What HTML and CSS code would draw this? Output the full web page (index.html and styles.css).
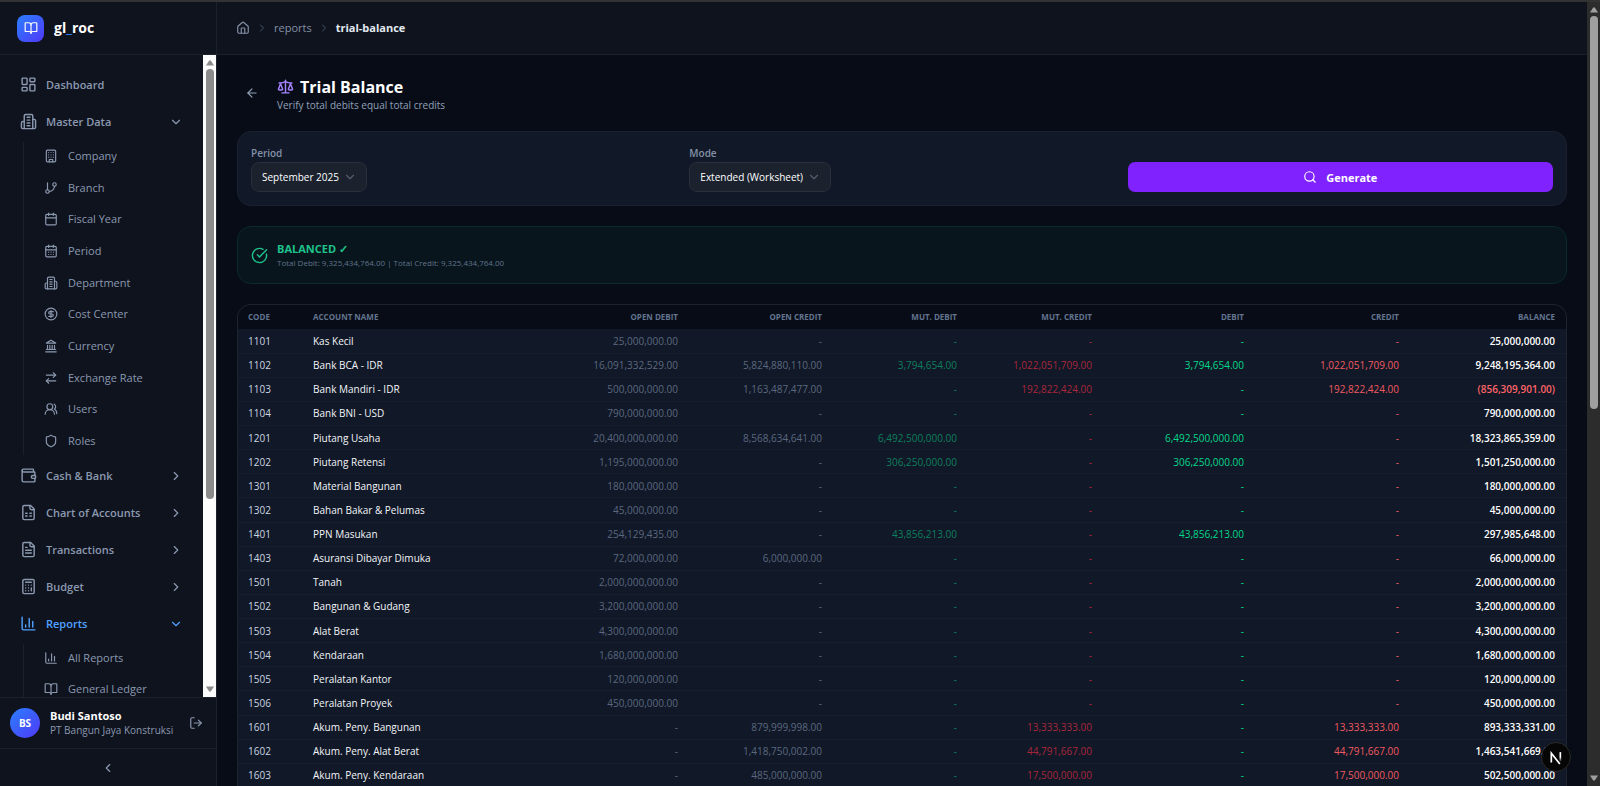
FILE: index.html
```
<!DOCTYPE html>
<html lang="en">
  <head>
    <meta charset="UTF-8" />
    <title>Trial Balance</title>
    <link rel="stylesheet" href="styles.css" />
  </head>
  <body>
    <!-- icon set -->
    <svg width="0" height="0" class="sprite" aria-hidden="true">
      <symbol id="i-book" viewBox="0 0 24 24"><path d="M12 7v14" /><path d="M3 18a1 1 0 0 1-1-1V4a1 1 0 0 1 1-1h5a4 4 0 0 1 4 4 4 4 0 0 1 4-4h5a1 1 0 0 1 1 1v13a1 1 0 0 1-1 1h-6a3 3 0 0 0-3 3 3 3 0 0 0-3-3z" /></symbol>
      <symbol id="i-dashboard" viewBox="0 0 24 24"><rect width="7" height="9" x="3" y="3" rx="1" /><rect width="7" height="5" x="14" y="3" rx="1" /><rect width="7" height="9" x="14" y="12" rx="1" /><rect width="7" height="5" x="3" y="16" rx="1" /></symbol>
      <symbol id="i-building2" viewBox="0 0 24 24"><path d="M6 22V4a2 2 0 0 1 2-2h8a2 2 0 0 1 2 2v18Z" /><path d="M6 12H4a2 2 0 0 0-2 2v6a2 2 0 0 0 2 2h2" /><path d="M18 9h2a2 2 0 0 1 2 2v9a2 2 0 0 1-2 2h-2" /><path d="M10 6h4M10 10h4M10 14h4M10 18h4" /></symbol>
      <symbol id="i-building" viewBox="0 0 24 24"><rect width="16" height="20" x="4" y="2" rx="2" /><path d="M9 22v-4h6v4" /><path d="M8 6h.01M16 6h.01M12 6h.01M12 10h.01M12 14h.01M16 10h.01M16 14h.01M8 10h.01M8 14h.01" /></symbol>
      <symbol id="i-branch" viewBox="0 0 24 24"><path d="M6 3v12" /><circle cx="18" cy="6" r="3" /><circle cx="6" cy="18" r="3" /><path d="M18 9a9 9 0 0 1-9 9" /></symbol>
      <symbol id="i-calendar" viewBox="0 0 24 24"><path d="M8 2v4M16 2v4M3 10h18" /><rect width="18" height="18" x="3" y="4" rx="2" /></symbol>
      <symbol id="i-calendar-days" viewBox="0 0 24 24"><path d="M8 2v4M16 2v4M3 10h18" /><rect width="18" height="18" x="3" y="4" rx="2" /><path d="M8 14h.01M12 14h.01M16 14h.01M8 18h.01M12 18h.01M16 18h.01" /></symbol>
      <symbol id="i-dollar" viewBox="0 0 24 24"><circle cx="12" cy="12" r="10" /><path d="M16 8h-6a2 2 0 1 0 0 4h4a2 2 0 1 1 0 4H8" /><path d="M12 18V6" /></symbol>
      <symbol id="i-landmark" viewBox="0 0 24 24"><path d="M3 22h18M6 18v-7M10 18v-7M14 18v-7M18 18v-7M4 18h16" /><path d="m12 2 8 5H4z" /></symbol>
      <symbol id="i-exchange" viewBox="0 0 24 24"><path d="m16 3 4 4-4 4" /><path d="M20 7H4" /><path d="m8 21-4-4 4-4" /><path d="M4 17h16" /></symbol>
      <symbol id="i-users" viewBox="0 0 24 24"><path d="M18 21a8 8 0 0 0-16 0" /><circle cx="10" cy="8" r="5" /><path d="M22 20c0-3.37-2-6.5-4-8a5 5 0 0 0-.45-8.3" /></symbol>
      <symbol id="i-shield" viewBox="0 0 24 24"><path d="M20 13c0 5-3.5 7.5-7.66 8.95a1 1 0 0 1-.67-.01C7.5 20.5 4 18 4 13V6a1 1 0 0 1 1-1c2 0 4.5-1.2 6.24-2.72a1.17 1.17 0 0 1 1.52 0C14.51 3.81 17 5 19 5a1 1 0 0 1 1 1z" /></symbol>
      <symbol id="i-wallet" viewBox="0 0 24 24"><path d="M19 7V4a1 1 0 0 0-1-1H5a2 2 0 0 0 0 4h15a1 1 0 0 1 1 1v4h-3a2 2 0 0 0 0 4h3a1 1 0 0 0 1-1v-2a1 1 0 0 0-1-1" /><path d="M3 5v14a2 2 0 0 0 2 2h15a1 1 0 0 0 1-1v-4" /></symbol>
      <symbol id="i-sheet" viewBox="0 0 24 24"><path d="M15 2H6a2 2 0 0 0-2 2v16a2 2 0 0 0 2 2h12a2 2 0 0 0 2-2V7Z" /><path d="M14 2v4a2 2 0 0 0 2 2h4" /><path d="M8 13h2M14 13h2M8 17h2M14 17h2" /></symbol>
      <symbol id="i-file" viewBox="0 0 24 24"><path d="M15 2H6a2 2 0 0 0-2 2v16a2 2 0 0 0 2 2h12a2 2 0 0 0 2-2V7Z" /><path d="M14 2v4a2 2 0 0 0 2 2h4" /><path d="M10 9H8M16 13H8M16 17H8" /></symbol>
      <symbol id="i-calculator" viewBox="0 0 24 24"><rect width="16" height="20" x="4" y="2" rx="2" /><path d="M8 6h8M16 14v4M16 10h.01M12 10h.01M8 10h.01M12 14h.01M8 14h.01M12 18h.01M8 18h.01" /></symbol>
      <symbol id="i-chart" viewBox="0 0 24 24"><path d="M3 3v16a2 2 0 0 0 2 2h16" /><path d="M18 17V9M13 17V5M8 17v-3" /></symbol>
      <symbol id="i-home" viewBox="0 0 24 24"><path d="M15 21v-8a1 1 0 0 0-1-1h-4a1 1 0 0 0-1 1v8" /><path d="M3 10a2 2 0 0 1 .71-1.53l7-6a2 2 0 0 1 2.58 0l7 6A2 2 0 0 1 21 10v9a2 2 0 0 1-2 2H5a2 2 0 0 1-2-2z" /></symbol>
      <symbol id="i-scale" viewBox="0 0 24 24"><path d="m16 16 3-8 3 8c-.87.65-1.92 1-3 1s-2.13-.35-3-1Z" /><path d="m2 16 3-8 3 8c-.87.65-1.92 1-3 1s-2.13-.35-3-1Z" /><path d="M7 21h10M12 3v18" /><path d="M3 7h2c2 0 5-1 7-2 2 1 5 2 7 2h2" /></symbol>
      <symbol id="i-back" viewBox="0 0 24 24"><path d="m12 19-7-7 7-7" /><path d="M19 12H5" /></symbol>
      <symbol id="i-search" viewBox="0 0 24 24"><circle cx="11" cy="11" r="8" /><path d="m21 21-4.3-4.3" /></symbol>
      <symbol id="i-check" viewBox="0 0 24 24"><path d="M21.8 10A10 10 0 1 1 17 3.34" /><path d="m9 11 3 3L22 4" /></symbol>
      <symbol id="i-logout" viewBox="0 0 24 24"><path d="M9 21H5a2 2 0 0 1-2-2V5a2 2 0 0 1 2-2h4" /><path d="m16 17 5-5-5-5" /><path d="M21 12H9" /></symbol>
      <symbol id="i-down" viewBox="0 0 24 24"><path d="m6 9 6 6 6-6" /></symbol>
      <symbol id="i-right" viewBox="0 0 24 24"><path d="m9 18 6-6-6-6" /></symbol>
      <symbol id="i-left" viewBox="0 0 24 24"><path d="m15 18-6-6 6-6" /></symbol>
    </svg>

    <div class="app">
      <aside class="sidebar">
        <div class="brand">
          <span class="brand-logo"><svg class="icon"><use href="#i-book" /></svg></span>
          <span class="brand-name">gl<span>_</span>roc</span>
        </div>

        <div class="nav-area">
          <nav class="nav">
            <a class="nav-item" href="#"><svg class="icon"><use href="#i-dashboard" /></svg>Dashboard</a>
            <button class="nav-item"><svg class="icon"><use href="#i-building2" /></svg>Master Data<svg class="icon chevron"><use href="#i-down" /></svg></button>
            <div class="subnav subnav-master">
              <a href="#"><svg class="icon"><use href="#i-building" /></svg>Company</a>
              <a href="#"><svg class="icon"><use href="#i-branch" /></svg>Branch</a>
              <a href="#"><svg class="icon"><use href="#i-calendar" /></svg>Fiscal Year</a>
              <a href="#"><svg class="icon"><use href="#i-calendar-days" /></svg>Period</a>
              <a href="#"><svg class="icon"><use href="#i-building2" /></svg>Department</a>
              <a href="#"><svg class="icon"><use href="#i-dollar" /></svg>Cost Center</a>
              <a href="#"><svg class="icon"><use href="#i-landmark" /></svg>Currency</a>
              <a href="#"><svg class="icon"><use href="#i-exchange" /></svg>Exchange Rate</a>
              <a href="#"><svg class="icon"><use href="#i-users" /></svg>Users</a>
              <a href="#"><svg class="icon"><use href="#i-shield" /></svg>Roles</a>
            </div>
            <button class="nav-item"><svg class="icon"><use href="#i-wallet" /></svg>Cash &amp; Bank<svg class="icon chevron"><use href="#i-right" /></svg></button>
            <button class="nav-item"><svg class="icon"><use href="#i-sheet" /></svg>Chart of Accounts<svg class="icon chevron"><use href="#i-right" /></svg></button>
            <button class="nav-item"><svg class="icon"><use href="#i-file" /></svg>Transactions<svg class="icon chevron"><use href="#i-right" /></svg></button>
            <button class="nav-item"><svg class="icon"><use href="#i-calculator" /></svg>Budget<svg class="icon chevron"><use href="#i-right" /></svg></button>
            <button class="nav-item active"><svg class="icon"><use href="#i-chart" /></svg>Reports<svg class="icon chevron"><use href="#i-down" /></svg></button>
            <div class="subnav">
              <a href="#"><svg class="icon"><use href="#i-chart" /></svg>All Reports</a>
              <a href="#"><svg class="icon"><use href="#i-book" /></svg>General Ledger</a>
            </div>
          </nav>
          <div class="scrollbar scrollbar-light">
            <svg class="arrow" viewBox="0 0 10 10"><path d="M4 2h2l4 6H0z" /></svg>
            <div class="track"><div class="thumb"></div></div>
            <svg class="arrow" viewBox="0 0 10 10"><path d="M4 8h2l4-6H0z" /></svg>
          </div>
        </div>

        <div class="user">
          <span class="avatar">BS</span>
          <div class="user-info">
            <strong>Budi Santoso</strong>
            <span>PT Bangun Jaya Konstruksi</span>
          </div>
          <button class="logout" aria-label="Log out"><svg class="icon"><use href="#i-logout" /></svg></button>
        </div>
        <button class="collapse" aria-label="Collapse sidebar"><svg class="icon"><use href="#i-left" /></svg></button>
      </aside>

      <div class="page">
        <header class="topbar">
          <a href="#" class="home" aria-label="Home"><svg class="icon"><use href="#i-home" /></svg></a>
          <svg class="icon sep"><use href="#i-right" /></svg>
          <a href="#">reports</a>
          <svg class="icon sep"><use href="#i-right" /></svg>
          <strong>trial-balance</strong>
        </header>

        <main class="content">
          <div class="heading">
            <button class="back" aria-label="Back"><svg class="icon"><use href="#i-back" /></svg></button>
            <div class="heading-text">
              <h1><svg class="icon"><use href="#i-scale" /></svg>Trial Balance</h1>
              <p>Verify total debits equal total credits</p>
            </div>
          </div>

          <form class="filters">
            <div class="field">
              <label for="period">Period</label>
              <div class="select">
                <select id="period"><option>September 2025</option></select>
                <svg class="icon"><use href="#i-down" /></svg>
              </div>
            </div>
            <div class="field">
              <label for="mode">Mode</label>
              <div class="select">
                <select id="mode"><option>Extended (Worksheet)</option></select>
                <svg class="icon"><use href="#i-down" /></svg>
              </div>
            </div>
            <button type="button" class="generate"><svg class="icon"><use href="#i-search" /></svg>Generate</button>
          </form>

          <div class="status">
            <svg class="icon"><use href="#i-check" /></svg>
            <div>
              <strong>BALANCED ✓</strong>
              <p>Total Debit: 9,325,434,764.00 | Total Credit: 9,325,434,764.00</p>
            </div>
          </div>

          <div class="table-card">
            <table>
              <colgroup>
                <col class="c-code" /><col class="c-name" /><col class="c-od" /><col class="c-oc" /><col class="c-md" /><col class="c-mc" /><col class="c-d" /><col class="c-c" /><col class="c-b" />
              </colgroup>
              <thead>
                <tr><th>CODE</th><th>ACCOUNT NAME</th><th>OPEN DEBIT</th><th>OPEN CREDIT</th><th>MUT. DEBIT</th><th>MUT. CREDIT</th><th>DEBIT</th><th>CREDIT</th><th>BALANCE</th></tr>
              </thead>
              <tbody>
                <tr><td>1101</td><td>Kas Kecil</td><td>25,000,000.00</td><td>-</td><td>-</td><td>-</td><td>-</td><td>-</td><td>25,000,000.00</td></tr>
                <tr><td>1102</td><td>Bank BCA - IDR</td><td>16,091,332,529.00</td><td>5,824,880,110.00</td><td>3,794,654.00</td><td>1,022,051,709.00</td><td>3,794,654.00</td><td>1,022,051,709.00</td><td>9,248,195,364.00</td></tr>
                <tr><td>1103</td><td>Bank Mandiri - IDR</td><td>500,000,000.00</td><td>1,163,487,477.00</td><td>-</td><td>192,822,424.00</td><td>-</td><td>192,822,424.00</td><td class="negative">(856,309,901.00)</td></tr>
                <tr><td>1104</td><td>Bank BNI - USD</td><td>790,000,000.00</td><td>-</td><td>-</td><td>-</td><td>-</td><td>-</td><td>790,000,000.00</td></tr>
                <tr><td>1201</td><td>Piutang Usaha</td><td>20,400,000,000.00</td><td>8,568,634,641.00</td><td>6,492,500,000.00</td><td>-</td><td>6,492,500,000.00</td><td>-</td><td>18,323,865,359.00</td></tr>
                <tr><td>1202</td><td>Piutang Retensi</td><td>1,195,000,000.00</td><td>-</td><td>306,250,000.00</td><td>-</td><td>306,250,000.00</td><td>-</td><td>1,501,250,000.00</td></tr>
                <tr><td>1301</td><td>Material Bangunan</td><td>180,000,000.00</td><td>-</td><td>-</td><td>-</td><td>-</td><td>-</td><td>180,000,000.00</td></tr>
                <tr><td>1302</td><td>Bahan Bakar &amp; Pelumas</td><td>45,000,000.00</td><td>-</td><td>-</td><td>-</td><td>-</td><td>-</td><td>45,000,000.00</td></tr>
                <tr><td>1401</td><td>PPN Masukan</td><td>254,129,435.00</td><td>-</td><td>43,856,213.00</td><td>-</td><td>43,856,213.00</td><td>-</td><td>297,985,648.00</td></tr>
                <tr><td>1403</td><td>Asuransi Dibayar Dimuka</td><td>72,000,000.00</td><td>6,000,000.00</td><td>-</td><td>-</td><td>-</td><td>-</td><td>66,000,000.00</td></tr>
                <tr><td>1501</td><td>Tanah</td><td>2,000,000,000.00</td><td>-</td><td>-</td><td>-</td><td>-</td><td>-</td><td>2,000,000,000.00</td></tr>
                <tr><td>1502</td><td>Bangunan &amp; Gudang</td><td>3,200,000,000.00</td><td>-</td><td>-</td><td>-</td><td>-</td><td>-</td><td>3,200,000,000.00</td></tr>
                <tr><td>1503</td><td>Alat Berat</td><td>4,300,000,000.00</td><td>-</td><td>-</td><td>-</td><td>-</td><td>-</td><td>4,300,000,000.00</td></tr>
                <tr><td>1504</td><td>Kendaraan</td><td>1,680,000,000.00</td><td>-</td><td>-</td><td>-</td><td>-</td><td>-</td><td>1,680,000,000.00</td></tr>
                <tr><td>1505</td><td>Peralatan Kantor</td><td>120,000,000.00</td><td>-</td><td>-</td><td>-</td><td>-</td><td>-</td><td>120,000,000.00</td></tr>
                <tr><td>1506</td><td>Peralatan Proyek</td><td>450,000,000.00</td><td>-</td><td>-</td><td>-</td><td>-</td><td>-</td><td>450,000,000.00</td></tr>
                <tr><td>1601</td><td>Akum. Peny. Bangunan</td><td>-</td><td>879,999,998.00</td><td>-</td><td>13,333,333.00</td><td>-</td><td>13,333,333.00</td><td>893,333,331.00</td></tr>
                <tr><td>1602</td><td>Akum. Peny. Alat Berat</td><td>-</td><td>1,418,750,002.00</td><td>-</td><td>44,791,667.00</td><td>-</td><td>44,791,667.00</td><td>1,463,541,669.00</td></tr>
                <tr><td>1603</td><td>Akum. Peny. Kendaraan</td><td>-</td><td>485,000,000.00</td><td>-</td><td>17,500,000.00</td><td>-</td><td>17,500,000.00</td><td>502,500,000.00</td></tr>
              </tbody>
            </table>
          </div>
        </main>
      </div>

      <div class="scrollbar scrollbar-dark">
        <svg class="arrow" viewBox="0 0 10 10"><path d="M4 2h2l4 6H0z" /></svg>
        <div class="track"><div class="thumb"></div></div>
        <svg class="arrow" viewBox="0 0 10 10"><path d="M4 8h2l4-6H0z" /></svg>
      </div>
    </div>

    <button class="dev-badge" aria-label="Dev tools">
      <svg viewBox="0 0 40 40">
        <defs>
          <linearGradient id="fade" x1="0" y1="0" x2="0" y2="1"><stop offset="0.5" stop-color="#fff" /><stop offset="1" stop-color="#fff" stop-opacity="0" /></linearGradient>
        </defs>
        <path d="M13.3 28V14.5L25.5 30" fill="none" stroke="#fff" stroke-width="2.4" />
        <rect x="25" y="13" width="2.4" height="14" fill="url(#fade)" />
      </svg>
    </button>
  </body>
</html>
```
FILE: styles.css
```
* {
  box-sizing: border-box;
}
body {
  margin: 0;
  background-color: #080c17;
  color: #f1f5f9;
  font-family: "Open Sans", "Noto Sans", sans-serif;
  font-size: 11px;
  line-height: 16px;
  overflow: hidden;
}
h1,
p {
  margin: 0;
}
a {
  color: inherit;
  text-decoration: none;
}
button {
  font-family: inherit;
  color: inherit;
  background: none;
  border: 0;
  padding: 0;
  cursor: pointer;
}
.sprite {
  position: absolute;
}
.icon {
  width: 14px;
  height: 14px;
  flex-shrink: 0;
  fill: none;
  stroke: currentColor;
  stroke-width: 2;
  stroke-linecap: round;
  stroke-linejoin: round;
}
.app {
  display: flex;
  height: 100vh;
  border-top: 2px solid #333333;
}

/* Sidebar */
.sidebar {
  width: 217px;
  flex-shrink: 0;
  display: flex;
  flex-direction: column;
  background-color: #0f131e;
  border-right: 1px solid #1b202b;
  color: #8b99b0;
}
.brand {
  display: flex;
  align-items: center;
  gap: 10px;
  height: 53px;
  padding: 0 17px;
  border-bottom: 1px solid #1b202b;
  flex-shrink: 0;
}
.brand-logo {
  display: flex;
  align-items: center;
  justify-content: center;
  width: 27px;
  height: 27px;
  border-radius: 8px;
  background: linear-gradient(135deg, #2b7fff, #4f39f6);
  color: #fff;
}
.brand-name {
  color: #fff;
  font-size: 14px;
  font-weight: 700;
}
.brand-name span {
  color: #2b7fff;
}
.nav-area {
  flex: 1;
  min-height: 0;
  display: flex;
  overflow: hidden;
}
.nav {
  flex: 1;
  display: flex;
  flex-direction: column;
  gap: 4px;
  padding: 13px 12px;
}
.nav-item {
  display: flex;
  align-items: center;
  gap: 9px;
  height: 33px;
  flex-shrink: 0;
  padding: 0 8px;
  font-size: 11px;
  font-weight: 600;
  text-align: left;
}
.nav-item .icon {
  width: 17px;
  height: 17px;
}
.nav-item .chevron {
  width: 14px;
  height: 14px;
  margin-left: auto;
}
.nav-item.active {
  color: #51a2ff;
}
.subnav {
  display: flex;
  flex-direction: column;
  justify-content: space-between;
  gap: 3px;
  flex-shrink: 0;
  margin-left: 11px;
  padding-left: 20px;
  border-left: 1px solid #1b202b;
}
.subnav-master {
  height: 313px;
}
.subnav a {
  display: flex;
  align-items: center;
  gap: 10px;
  height: 28px;
}
.user {
  display: flex;
  align-items: center;
  gap: 10px;
  height: 51px;
  flex-shrink: 0;
  padding: 0 13px 0 10px;
  border-top: 1px solid #1b202b;
}
.avatar {
  display: flex;
  align-items: center;
  justify-content: center;
  width: 30px;
  height: 30px;
  border-radius: 50%;
  background: linear-gradient(135deg, #2b7fff, #4f39f6);
  color: #fff;
  font-size: 10px;
  font-weight: 700;
}
.user-info {
  flex: 1;
  min-width: 0;
  font-size: 10px;
  line-height: 15px;
  white-space: nowrap;
}
.user-info strong {
  display: block;
  color: #fff;
  font-size: 11px;
}
.logout {
  display: flex;
}
.collapse {
  display: flex;
  align-items: center;
  justify-content: center;
  height: 38px;
  flex-shrink: 0;
  border-top: 1px solid #1b202b;
}

/* Scrollbars */
.scrollbar {
  width: 13px;
  flex-shrink: 0;
  display: flex;
  flex-direction: column;
  padding: 2px 0;
}
.scrollbar .arrow {
  width: 8px;
  height: 12px;
  margin: 0 auto;
}
.scrollbar .track {
  flex: 1;
}
.scrollbar .thumb {
  width: 8px;
  margin: 0 auto;
  border-radius: 4px;
}
.scrollbar-light {
  background-color: #fcfcfc;
}
.scrollbar-light .thumb {
  height: 70%;
  background-color: #8b8b8b;
}
.scrollbar-light .arrow {
  fill: #8b8b8b;
}
.scrollbar-dark {
  background-color: #2c2c2c;
}
.scrollbar-dark .thumb {
  height: 52%;
  background-color: #9f9f9f;
}
.scrollbar-dark .arrow {
  fill: #9f9f9f;
}

/* Page */
.page {
  flex: 1;
  min-width: 0;
  overflow: hidden;
}
.topbar {
  display: flex;
  align-items: center;
  gap: 6px;
  height: 53px;
  padding: 0 19px;
  background-color: #0f131e;
  border-bottom: 1px solid #1b202b;
  color: #8391a7;
}
.topbar .home {
  display: flex;
}
.topbar .sep {
  width: 12px;
  height: 12px;
  color: #45556c;
}
.topbar strong {
  color: #e2e8f0;
}
.content {
  padding: 20px;
  display: flex;
  flex-direction: column;
  gap: 20px;
}
.heading {
  display: flex;
  align-items: center;
  gap: 11px;
  height: 36px;
}
.heading-text {
  padding-top: 3px;
}
.back {
  display: flex;
  align-items: center;
  justify-content: center;
  width: 29px;
  height: 29px;
  color: #90a1b9;
}
.heading h1 {
  display: flex;
  align-items: center;
  gap: 6px;
  font-size: 16px;
  line-height: 20px;
  color: #fff;
}
.heading h1 .icon {
  width: 17px;
  height: 17px;
  color: #a684ff;
}
.heading p {
  font-size: 10px;
  color: #90a1b9;
}
.filters {
  display: grid;
  grid-template-columns: repeat(3, 1fr);
  gap: 13px;
  align-items: end;
  padding: 13px;
  background-color: #111827;
  border: 1px solid #1b2130;
  border-radius: 14px;
}
.field {
  display: flex;
  flex-direction: column;
  align-items: flex-start;
  gap: 1px;
}
.field label {
  font-size: 10px;
  font-weight: 600;
  color: #8391a7;
}
.select {
  position: relative;
}
.select select {
  appearance: none;
  height: 30px;
  padding: 0 27px 0 10px;
  border: 1px solid #29303c;
  border-radius: 8px;
  background-color: #1b222e;
  color: #fff;
  font-family: inherit;
  font-size: 10px;
  font-weight: 500;
}
.select .icon {
  position: absolute;
  right: 10px;
  top: 8px;
  color: #56606f;
}
.generate {
  display: flex;
  align-items: center;
  justify-content: center;
  gap: 9px;
  height: 30px;
  border-radius: 7px;
  background-color: #7f22fe;
  color: #fff;
  font-size: 11px;
  font-weight: 700;
}
.status {
  display: flex;
  align-items: center;
  gap: 9px;
  height: 58px;
  padding: 0 13px;
  background-color: #08151d;
  border: 1px solid #0a2a2b;
  border-radius: 14px;
}
.status .icon {
  width: 17px;
  height: 17px;
  color: #1fc28c;
}
.status strong {
  display: block;
  font-size: 11px;
  color: #1fc28c;
}
.status p {
  font-size: 8px;
  line-height: 12px;
  color: #62738a;
}

/* Report table */
.table-card {
  overflow: hidden;
  background-color: #111827;
  border: 1px solid #1d2330;
  border-bottom: 0;
  border-radius: 14px 14px 0 0;
}
table {
  width: 100%;
  height: 483px;
  table-layout: fixed;
  border-collapse: collapse;
  font-size: 10px;
  line-height: 14px;
}
.c-code {
  width: 65px;
}
.c-name {
  width: 230px;
}
.c-od {
  width: 156px;
}
.c-oc {
  width: 144px;
}
.c-md,
.c-mc {
  width: 135px;
}
.c-d {
  width: 152px;
}
.c-c {
  width: 155px;
}
.c-b {
  width: 156px;
}
th,
td {
  padding: 0 11px 0 10px;
  text-align: right;
  white-space: nowrap;
}
th {
  height: 24px;
  background-color: #080c17;
  color: #62748e;
  font-size: 8px;
  font-weight: 700;
}
td {
  height: 24px;
  border-bottom: 1px solid #171e2d;
}
th:nth-child(-n + 2),
td:nth-child(-n + 2) {
  text-align: left;
}
td:nth-child(1) {
  color: #cad5e2;
}
td:nth-child(3),
td:nth-child(4) {
  color: #5b6880;
}
td:nth-child(5) {
  color: #0d7f5e;
}
td:nth-child(6) {
  color: #a9273b;
}
td:nth-child(7) {
  color: #05d98c;
}
td:nth-child(8) {
  color: #f25a62;
}
td:nth-child(9) {
  color: #fff;
  font-weight: 600;
}
td.negative {
  color: #ff6467;
}

.dev-badge {
  position: fixed;
  right: 29px;
  bottom: 14px;
  width: 30px;
  height: 30px;
  border: 1px solid #2a2a2a;
  border-radius: 50%;
  background-color: #060606;
}
.dev-badge svg {
  display: block;
  width: 28px;
  height: 28px;
}
```
